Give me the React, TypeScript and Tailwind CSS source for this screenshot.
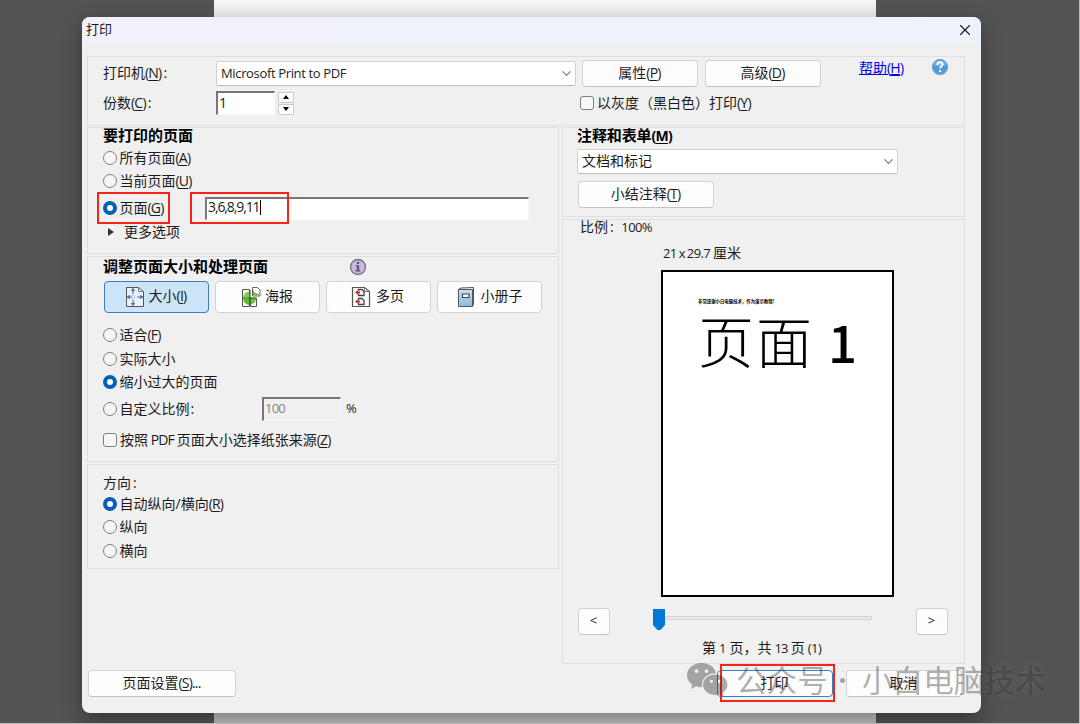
import React, { useState } from "react";
import { ChevronDown, X } from "lucide-react";
import clsx from "clsx";

const Key = ({ k, tail = "" }: { k: string; tail?: string }) => (
    <span className="tracking-[-0.8px]">
        (<span className="underline underline-offset-2">{k}</span>){tail}
    </span>
);

interface ChoiceProps {
    checked?: boolean;
    onClick?: () => void;
    className?: string;
    children: React.ReactNode;
}

const Radio: React.FC<ChoiceProps> = ({ checked, onClick, className, children }) => (
    <button
        type="button"
        role="radio"
        aria-checked={!!checked}
        onClick={onClick}
        className={clsx("flex h-[22px] items-center gap-[2.5px] whitespace-nowrap", className)}
    >
        <span
            className={clsx(
                "h-[14px] w-[14px] shrink-0 rounded-full",
                checked ? "border-[4px] border-[#0560b8] bg-white" : "border border-[#808080] bg-[#f6f6f6]"
            )}
        />
        <span className="mb-[2px]">{children}</span>
    </button>
);

const Checkbox: React.FC<ChoiceProps> = ({ checked, onClick, className, children }) => (
    <button
        type="button"
        role="checkbox"
        aria-checked={!!checked}
        onClick={onClick}
        className={clsx("flex h-[22px] items-center gap-[3px] whitespace-nowrap", className)}
    >
        <span
            className={clsx(
                "h-[14px] w-[14px] shrink-0 rounded-[3px] border border-[#808080]",
                checked ? "bg-[#0560b8]" : "bg-[#f8f8f8]"
            )}
        />
        <span className="mb-[2px]">{children}</span>
    </button>
);

interface ButtonProps {
    primary?: boolean;
    className?: string;
    children: React.ReactNode;
}

const Button: React.FC<ButtonProps> = ({ primary, className, children }) => (
    <button
        type="button"
        className={clsx(
            "flex h-[27px] shrink-0 items-center justify-center whitespace-nowrap rounded-[4px] border bg-[#fdfdfd] pb-[2px] pr-px",
            primary ? "border-[#2e83cd]" : "border-[#d2d2d2] border-b-[#c3c3c3]",
            className
        )}
    >
        {children}
    </button>
);

const Select = ({ className, children }: { className?: string; children: React.ReactNode }) => (
    <div
        className={clsx(
            "flex h-[25px] shrink-0 items-center justify-between rounded-[2px] border border-[#d0d0d0] border-b-[#bdbdbd] bg-white pl-1 pr-px",
            className
        )}
    >
        <span className="mb-[2px]">{children}</span>
        <ChevronDown size={15} strokeWidth={1.8} className="text-[#777777]" />
    </div>
);

const Panel = ({ className, children }: { className?: string; children: React.ReactNode }) => (
    <section className={clsx("flex flex-col border border-[#dedede]", className)}>{children}</section>
);

const sunken = "border-l-2 border-t-2 border-r border-b border-l-[#777777] border-t-[#777777] border-r-[#f8f8f8] border-b-[#f8f8f8]";

const SizeIcon = () => (
    <svg width="20" height="22" viewBox="0 0 20 22" fill="none">
        <path d="M1.5 1.5h12l5 4v15h-17z" fill="#e9f1fa" stroke="#555" />
        <path d="M13.5 1.5v4h5" stroke="#777" />
        <path d="M8 3v5M8 14v5M2 11h5M12 11h6" stroke="#5572b5" strokeWidth="1.2" />
        <path d="M8 1.5L5.8 5h4.4zM8 20.5L5.8 17h4.4zM1.5 11L5 8.8v4.4zM18.5 11L15 8.8v4.4z" fill="#5572b5" />
        <path d="M6.5 9.5h3v3h-3z" stroke="#9aafd8" strokeDasharray="1 1" />
    </svg>
);

const PosterIcon = () => (
    <svg width="20" height="22" viewBox="0 0 20 22" fill="none">
        <path d="M1.5 3.5h7v17h-7z" fill="#fff" stroke="#555" />
        <path d="M9.5 12.5h6v8h-6z" fill="#fff" stroke="#555" />
        <path d="M8.5 5.5v6H2a6.500 6.500 0 0 1 6.500-6z" fill="#7fd04e" />
        <path d="M2 12.5h6.500V19A6.500 6.500 0 0 1 2 12.500z" fill="#62bd31" />
        <path d="M9.5 12.5H15a6 6 0 0 1-5.500 6z" fill="#6cc43c" />
        <path d="M11.5 1.5h5L19 4v6h-7.500z" fill="#fff" stroke="#666" />
        <path d="M12 3.5c1 3 3 4.500 6.500 4.500v1.500H12z" fill="#6cc43c" />
        <path d="M1.5 12h14M9 4v16" stroke="#27551b" />
    </svg>
);

const MultiIcon = () => (
    <svg width="20" height="22" viewBox="0 0 20 22" fill="none">
        <path d="M1.5 1.5h12l5 4v15h-17z" fill="#fcfcfc" stroke="#555" strokeWidth="1.2" />
        <path d="M13.5 1.5v4h5" stroke="#777" />
        <path d="M7.5 5V3.500H11l2 2v4H7.500V8M7.500 14v-1.500H11l2 2v4H7.500V17" fill="#fff" stroke="#444" strokeWidth="1.3" />
        <path d="M5 6.500h4M5 15.500h4" stroke="#d32029" strokeWidth="1.8" />
        <path d="M4 6.500l3-2v4zM4 15.500l3-2v4z" fill="#d32029" />
    </svg>
);

const BookletIcon = () => (
    <svg width="18" height="22" viewBox="0 0 18 22" fill="none">
        <defs>
            <linearGradient id="cover" x1="0" y1="0" x2="0" y2="1">
                <stop offset="0" stopColor="#c8dff2" />
                <stop offset="1" stopColor="#8fb9e0" />
            </linearGradient>
        </defs>
        <path d="M1.5 3.5L4 2l12.500-.5v17l-1 2" fill="#f5f5f5" stroke="#555" />
        <path d="M1.5 3.5h14v17h-14z" fill="url(#cover)" stroke="#4e5a66" />
        <path d="M5.5 8H12v3.500H5.500z" fill="#fff" stroke="#444" strokeWidth="1.2" />
    </svg>
);

const InfoIcon = () => (
    <svg width="18" height="18" viewBox="0 0 18 18">
        <circle cx="9" cy="9" r="7.5" fill="#c5b9e2" stroke="#77717f" strokeWidth="1.3" />
        <path d="M7.900 3.800h2.300v2.100h-2.300zM6.700 7.200h3.500v4.800h1.200v1.400h-4.800v-1.400h1.200v-3.400h-1.100z" fill="#655382" />
    </svg>
);

const HelpIcon = () => (
    <svg width="18" height="18" viewBox="0 0 18 18" fill="none">
        <circle cx="9" cy="9" r="7.7" fill="#519bd9" stroke="#82a5c3" />
        <path d="M3 7a6.300 6.300 0 0 1 12 0c-3 1-7 2-12 0z" fill="#79b5e6" />
        <path d="M6.400 6.900c0-3.600 5.400-3.500 5.200-.4-.1 1.700-2.500 1.800-2.500 4" stroke="#fff" strokeWidth="1.9" />
        <circle cx="9.1" cy="13.1" r="1.2" fill="#fff" />
    </svg>
);

const WeChatIcon = () => (
    <svg width="42" height="36" viewBox="0 0 42 36">
        <path
            fillRule="evenodd"
            d="M15.500 1C7.300 1 1 6.400 1 13.200c0 3.900 2 7.200 5.300 9.500L5 27l5-2.700c1.900.6 3.900.9 6.200.9C14.600 17.300 21 11 30 11.200 28.800 5.200 22.800 1 15.500 1zM10.500 7.200a1.900 1.900 0 1 1 0 3.800 1.900 1.900 0 0 1 0-3.800zM20.500 7.200a1.900 1.900 0 1 1 0 3.800 1.900 1.900 0 0 1 0-3.800z"
        />
        <path
            fillRule="evenodd"
            d="M29.500 12.500C22.600 12.500 17 17 17 22.800S22.600 33 29.500 33c1.500 0 3-.2 4.300-.7l4 2.200-1-3.600c2.900-1.900 4.700-4.800 4.700-8.100 0-5.800-5.300-10.300-12-10.300zM25.500 17.700a1.600 1.600 0 1 1 0 3.200 1.600 1.600 0 0 1 0-3.200zM33.500 17.700a1.600 1.600 0 1 1 0 3.200 1.600 1.600 0 0 1 0-3.200z"
        />
    </svg>
);

const modes = [
    { id: "size", label: <>大小<Key k="I" /></>, icon: <SizeIcon />, gap: "gap-[4px] pr-[2px]" },
    { id: "poster", label: "海报", icon: <PosterIcon />, gap: "gap-[4px] pr-px" },
    { id: "multiple", label: "多页", icon: <MultiIcon />, gap: "gap-[5px] pr-[2px]" },
    { id: "booklet", label: "小册子", icon: <BookletIcon />, gap: "gap-[6px]" },
];

const PrinterPanel = () => {
    const [grayscale, setGrayscale] = useState(false);

    return (
        <Panel className="h-[70px] pl-[15px] pt-[3px]">
            <div className="flex h-[27px] items-center">
                <span className="mb-[2px] w-[113px]">打印机<Key k="N" /><span className="ml-[2px]">:</span></span>
                <Select className="w-[360px]">
                    <span className="text-[13px] tracking-[-0.35px]">Microsoft Print to PDF</span>
                </Select>
                <Button className="ml-[6px] w-[116px]">属性<Key k="P" /></Button>
                <Button className="ml-[7px] w-[116px]">高级<Key k="D" /></Button>
                <a href="#" className="mb-[12px] ml-[38px] w-[72px] text-[#0000ee] underline">
                    帮助<Key k="H" />
                </a>
                <span className="mb-[13px]"><HelpIcon /></span>
            </div>
            <div className="mt-[4px] flex h-6 items-center">
                <span className="mb-[2px] w-[113px]">份数<Key k="C" /><span className="ml-[2px]">:</span></span>
                <input
                    defaultValue="1"
                    className={clsx("h-6 w-[59px] bg-white pb-[3px] pl-px outline-none", sunken)}
                />
                <div className="ml-[3px] flex w-4 flex-col gap-px">
                    <button type="button" className="flex h-[11px] items-center justify-center border border-[#cccccc] bg-white">
                        <span className="border-x-[3px] border-b-4 border-x-transparent border-b-black" />
                    </button>
                    <button type="button" className="flex h-[11px] items-center justify-center border border-[#cccccc] bg-white">
                        <span className="border-x-[3px] border-t-4 border-x-transparent border-t-black" />
                    </button>
                </div>
                <Checkbox className="ml-[286px]" checked={grayscale} onClick={() => setGrayscale(!grayscale)}>
                    以灰度（黑白色）打印<Key k="Y" />
                </Checkbox>
            </div>
        </Panel>
    );
};

const PagesPanel = () => {
    const [range, setRange] = useState("pages");

    return (
        <Panel className="h-[127px] pl-[15px]">
            <h2 className="h-[18px] text-[15px] font-bold leading-[15px] text-black">要打印的页面</h2>
            <Radio className="mt-px" checked={range === "all"} onClick={() => setRange("all")}>
                所有页面<Key k="A" />
            </Radio>
            <Radio className="mt-px" checked={range === "current"} onClick={() => setRange("current")}>
                当前页面<Key k="U" />
            </Radio>
            <div className="mt-[4px] flex h-6 items-center">
                <div className="relative w-[102px]">
                    <Radio checked={range === "pages"} onClick={() => setRange("pages")}>
                        页面<Key k="G" />
                    </Radio>
                    <div className="pointer-events-none absolute -left-[6px] -top-[5px] h-[32px] w-[73px] border-2 border-[#f52318]" />
                </div>
                <div className={clsx("relative flex h-[23px] w-[324px] items-center bg-white pl-px", sunken)}>
                    <span className="mb-[4px] text-[14px] tracking-[-1.1px]">3,6,8,9,11</span>
                    <span className="mb-[3px] h-[15px] w-px bg-black" />
                    <div className="pointer-events-none absolute -left-[17px] -top-[7px] h-[32px] w-[99px] border-2 border-[#f52318]" />
                </div>
            </div>
            <div className="flex h-6 items-center">
                <span className="ml-[5px] border-y-4 border-l-[6px] border-y-transparent border-l-[#333333]" />
                <span className="mb-[2px] ml-[10px]">更多选项</span>
            </div>
        </Panel>
    );
};

const SizingPanel = () => {
    const [mode, setMode] = useState("size");
    const [scale, setScale] = useState("shrink");
    const [paperSource, setPaperSource] = useState(false);

    return (
        <Panel className="mt-[2px] h-[206px] pl-[15px]">
            <div className="flex h-[21px] items-center">
                <h2 className="mb-[2px] w-[246px] text-[15px] font-bold text-black">调整页面大小和处理页面</h2>
                <span className="mb-px"><InfoIcon /></span>
            </div>
            <div className="ml-px mt-[3px] flex gap-[6px]">
                {modes.map((m) => (
                    <button
                        key={m.id}
                        type="button"
                        onClick={() => setMode(m.id)}
                        className={clsx(
                            "flex h-[32px] w-[105px] items-center justify-center rounded-[4px] border",
                            m.gap,
                            mode === m.id ? "border-[#3880bd] bg-[#cce4f7]" : "border-[#d2d2d2] bg-[#fdfdfd]"
                        )}
                    >
                        {m.icon}
                        <span className="mb-[3px]">{m.label}</span>
                    </button>
                ))}
            </div>
            <Radio className="mt-[11px]" checked={scale === "fit"} onClick={() => setScale("fit")}>
                适合<Key k="F" />
            </Radio>
            <Radio className="mt-[2px]" checked={scale === "actual"} onClick={() => setScale("actual")}>
                实际大小
            </Radio>
            <Radio className="mt-px" checked={scale === "shrink"} onClick={() => setScale("shrink")}>
                缩小过大的页面
            </Radio>
            <div className="mt-[4px] flex h-6 items-center">
                <Radio className="w-[159px]" checked={scale === "custom"} onClick={() => setScale("custom")}>
                    自定义比例<span className="ml-px">:</span>
                </Radio>
                <div className={clsx("flex h-6 w-[79px] items-center pb-[2px] pl-px text-[13px] tracking-[-0.8px] text-[#858585]", sunken)}>
                    100
                </div>
                <span className="ml-[5px] text-[13px]">%</span>
            </div>
            <Checkbox className="mt-[8px]" checked={paperSource} onClick={() => setPaperSource(!paperSource)}>
                <span className="[word-spacing:-1px]">
                    按照 <span className="tracking-[-0.8px]">PDF</span> 页面大小选择纸张来源<Key k="Z" />
                </span>
            </Checkbox>
        </Panel>
    );
};

const OrientationPanel = () => {
    const [orientation, setOrientation] = useState("auto");

    return (
        <Panel className="mt-[2px] h-[105px] pl-[15px] pt-[8px]">
            <span className="h-5 leading-[19px]">方向<span className="ml-[2px]">:</span></span>
            <Radio checked={orientation === "auto"} onClick={() => setOrientation("auto")}>
                自动纵向/横向<Key k="R" />
            </Radio>
            <Radio className="mt-px" checked={orientation === "portrait"} onClick={() => setOrientation("portrait")}>
                纵向
            </Radio>
            <Radio className="mt-[2px]" checked={orientation === "landscape"} onClick={() => setOrientation("landscape")}>
                横向
            </Radio>
        </Panel>
    );
};

const CommentsPanel = () => (
    <Panel className="h-[90px] pl-[14px]">
        <h2 className="h-[18px] text-[15px] font-bold leading-[15px] tracking-[-0.1px] text-black">
            注释和表单<span className="text-[14px]"><Key k="M" /></span>
        </h2>
        <Select className="mt-[3px] w-[321px]">文档和标记</Select>
        <Button className="ml-px mt-[7px] w-[136px]">小结注释<Key k="T" /></Button>
    </Panel>
);

const PreviewPanel = () => (
    <Panel className="mt-[2px] h-[445px]">
        <span className="ml-[17px] h-[18px] leading-[14px]">
            比例<span className="ml-[2px]">:</span> <span className="ml-1 text-[13px] tracking-[-0.6px]">100%</span>
        </span>
        <span className="ml-[100px] mt-[6px] h-5 leading-[18px] [word-spacing:-0.8px]">
            <span className="text-[13px] tracking-[-0.6px]">21 x 29.7</span> 厘米
        </span>
        <div className="ml-[98px] mt-[6px] flex h-[327px] w-[233px] shrink-0 flex-col border-2 border-black bg-white pl-[35px] pt-[26px] text-black">
            <span className="h-[6px] whitespace-nowrap text-[4.4px] font-bold leading-[6px]">
                非常感谢小白电脑技术，作为演示教程!
            </span>
            <div className="flex h-[70px] items-center whitespace-nowrap font-['Noto_Sans_CJK_SC',sans-serif]">
                <span className="text-[56px] font-light leading-[70px] tracking-[2px]">页面</span>
                <span className="ml-[14px] mt-[3px] font-['Noto_Sans_CJK_SC',sans-serif] text-[51px] font-medium leading-[70px]">1</span>
            </div>
        </div>
        <div className="mt-[11px] flex h-[27px] items-center pl-[15px]">
            <Button className="w-8 text-[13px]">&lt;</Button>
            <div className="ml-[43px] mr-[44px] flex h-[27px] w-[219px] items-start pt-px">
                <svg width="12" height="21" viewBox="0 0 12 21" className="shrink-0">
                    <path d="M0 0h12v16l-4.500 5h-3L0 16z" fill="#0078d7" />
                </svg>
                <div className="mt-[7px] h-1 flex-1 border border-[#d6d6d6] bg-[#e7eaea]" />
            </div>
            <Button className="w-8 text-[13px]">&gt;</Button>
        </div>
        <span className="mt-[4px] h-5 pr-[4px] text-center leading-[18px] [word-spacing:-0.6px]">
            第 <span className="text-[13px]">1</span> 页，共 <span className="text-[13px] tracking-[-0.8px]">13</span> 页{" "}
            <span className="text-[13px] tracking-[-0.6px]">(1)</span>
        </span>
    </Panel>
);

const Watermark = () => (
    <div className="pointer-events-none absolute left-[686px] top-[660px] flex h-10 items-center whitespace-nowrap text-[30.6px] leading-10 text-[#303030]/40 [text-shadow:0_0_12px_rgba(255,255,255,0.12)]">
        <span className="-mt-px fill-current"><WeChatIcon /></span>
        <span className="ml-[8px] w-[92px]">公众号</span>
        <span className="mx-[12px] h-[5px] w-[5px] rounded-full bg-current" />
        <span className="ml-[5px]">小白电脑技术</span>
    </div>
);

const PrintDialog = () => (
    <div
        role="dialog"
        aria-label="打印"
        className="absolute left-[82px] top-[17px] flex h-[696px] w-[899px] flex-col overflow-hidden rounded-[8px] bg-[#f0f0f0] shadow-[0_8px_20px_rgba(0,0,0,0.35)]"
    >
        <header className="flex h-[27px] shrink-0 items-center justify-between bg-gradient-to-r from-[#f1f1f9] to-[#edf3fa] pb-px pl-1 pr-[7px]">
            <span className="text-[13px]">打印</span>
            <X size={18} strokeWidth={1.5} />
        </header>
        <main className="flex flex-col pl-[5px] pr-[16px] pt-[12px]">
            <PrinterPanel />
            <div className="mt-px flex gap-[3px]">
                <div className="flex w-[472px] flex-col">
                    <PagesPanel />
                    <SizingPanel />
                    <OrientationPanel />
                </div>
                <div className="flex flex-1 flex-col">
                    <CommentsPanel />
                    <PreviewPanel />
                </div>
            </div>
        </main>
        <footer className="mt-[6px] flex items-center pl-[6px]">
            <Button className="w-[148px]">页面设置<Key k="S" tail="..." /></Button>
            <div className="relative ml-[481px]">
                <Button primary className="w-[116px]">打印</Button>
                <div className="pointer-events-none absolute -top-[6px] left-[3px] h-[38px] w-[115px] border-2 border-[#f52318]" />
            </div>
            <Button className="ml-[13px] w-[116px]">取消</Button>
        </footer>
    </div>
);

const App = () => (
    <div className="relative flex h-[724px] w-[1080px] justify-center overflow-hidden border-b border-r border-[#b8b8b8] bg-[#535353] font-['Open_Sans','Noto_Sans_CJK_SC',sans-serif] text-[14px] text-[#1b1b1b]">
        <div className="ml-[11px] h-full w-[662px] bg-gradient-to-b from-[#f8f8f8] from-0% via-[#e9e9e6] via-[2%] to-[#c2c2c2]" />
        <PrintDialog />
        <Watermark />
    </div>
);

export default App;
